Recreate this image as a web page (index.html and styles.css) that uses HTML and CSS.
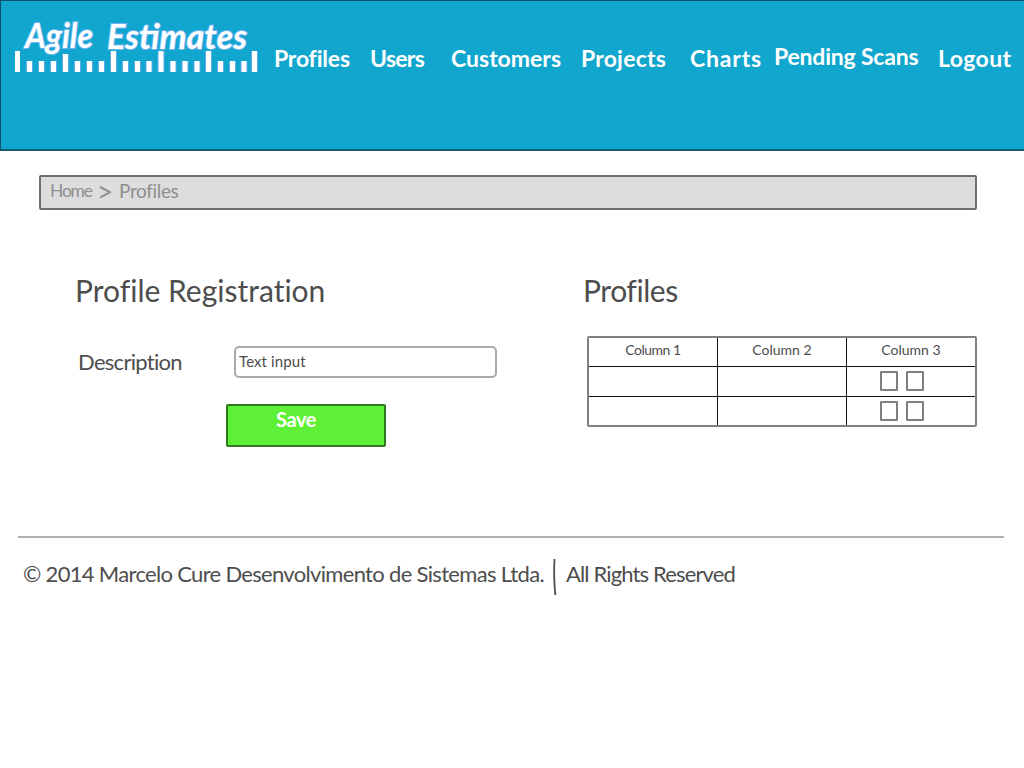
FILE: index.html
```html
<!DOCTYPE html>
<html lang="en">
<head>
<meta charset="utf-8">
<title>Agile Estimates - Profiles</title>
<link rel="stylesheet" href="styles.css">
</head>
<body>
<header class="header">
  <svg class="logo" width="244" height="68" viewBox="0 -8 244 68" role="img" aria-label="Agile Estimates">
    <g>
      <path class="ticks-halo" d="M14.500 46v11M26.500 46v11M38.500 46v11M50.500 39v18M62.500 46v11M74.500 46v11M86.500 46v11M98.500 36v21M110.500 46v11M122.500 46v11M134 46v11M146 36v21M158 46v11M170 46v11M182 46v11M193.500 36v21M205.500 46v11M217.500 46v11M229 46v11M239.500 36v21"/>
      <path class="ticks" d="M2.500 36v21M14.500 46v11M26.500 46v11M38.500 46v11M50.500 39v18M62.500 46v11M74.500 46v11M86.500 46v11M98.500 36v21M110.500 46v11M122.500 46v11M134 46v11M146 36v21M158 46v11M170 46v11M182 46v11M193.500 36v21M205.500 46v11M217.500 46v11M229 46v11M239.500 36v21"/>
    </g>
    <g class="logo-text">
      <text x="10" y="33" textLength="68" lengthAdjust="spacingAndGlyphs">Agile</text>
      <text x="92" y="34" textLength="140" lengthAdjust="spacingAndGlyphs">Estimates</text>
    </g>
  </svg>
  <nav class="nav">
    <a class="nav-profiles">Profiles</a>
    <a class="nav-users">Users</a>
    <a class="nav-customers">Customers</a>
    <a class="nav-projects">Projects</a>
    <a class="nav-charts">Charts</a>
    <a class="nav-scans">Pending Scans</a>
    <a class="nav-logout">Logout</a>
  </nav>
</header>

<div class="breadcrumb">
  <span class="crumb-home">Home</span>
  <span class="crumb-sep">&gt;</span>
  <span class="crumb-page">Profiles</span>
</div>

<main class="main">
  <section class="registration">
    <h2 class="title">Profile Registration</h2>
    <div class="field">
      <label class="label" for="description">Description</label>
      <input class="input" id="description" type="text" value="Text input">
    </div>
    <button class="save" type="button">Save</button>
  </section>

  <section class="profiles">
    <h2 class="title title-list">Profiles</h2>
    <div class="table">
      <div class="cell column-one">Column 1</div>
      <div class="cell">Column 2</div>
      <div class="cell">Column 3</div>
      <div class="cell"></div>
      <div class="cell"></div>
      <div class="cell actions"><span class="box"></span><span class="box"></span></div>
      <div class="cell"></div>
      <div class="cell"></div>
      <div class="cell actions"><span class="box"></span><span class="box"></span></div>
    </div>
  </section>
</main>

<footer class="footer">
  <span class="copyright">© 2014 Marcelo Cure Desenvolvimento de Sistemas Ltda.</span>
  <svg class="divider" width="6" height="38" viewBox="0 0 6 38"><path d="M2.500 1Q1.500 18 3.300 37"/></svg>
  <span class="rights">All Rights Reserved</span>
</footer>
</body>
</html>
```
FILE: styles.css
```css
* { box-sizing: border-box; }

body {
  margin: 0;
  background: #fff;
  color: #4d4d4d;
  font-family: Lato, sans-serif;
  font-variant-ligatures: none;
}

.header {
  display: flex;
  height: 151px;
  background: #11a6cd;
  border: 1px solid #0a5368;
  border-right: 0;
  border-bottom: 2px solid #0d5c72;
}

.logo { flex: none; margin: 6px 0 0 14px; }

.logo-text {
  font: italic bold 34px Lato, sans-serif;
  fill: #fff;
  stroke: #6fb4f2;
  stroke-width: 2px;
  paint-order: stroke;
}

.ticks-halo { stroke: #5cabec; stroke-width: 7; fill: none; }
.ticks { stroke: #fff; stroke-width: 5; fill: none; }

.nav {
  display: grid;
  grid-template-columns: 96px 81px 130px 109px 84px 164px 76px;
  align-items: start;
  margin: 45px 0 0 15px;
  color: #fff;
  font-size: 23px;
  font-weight: bold;
  line-height: 24px;
  white-space: nowrap;
}

.nav-profiles { letter-spacing: -0.2px; }
.nav-users { letter-spacing: -0.7px; }
.nav-projects { letter-spacing: 0.2px; }
.nav-charts { letter-spacing: 0.8px; }
.nav-scans { letter-spacing: -0.2px; margin-top: -2px; }
.nav-logout { letter-spacing: 0.4px; }

.breadcrumb {
  display: grid;
  grid-template-columns: 47px 22px auto;
  align-items: center;
  width: 938px;
  height: 35px;
  margin: 24px 0 0 39px;
  padding: 0 9px 3px;
  background: #ddd;
  border: 2px solid #6f6f6f;
  border-radius: 2px;
  color: #8f8f8f;
  font-size: 19px;
  line-height: 24px;
}

.crumb-home { font-size: 17.5px; letter-spacing: -1.2px; }
.crumb-sep { font-size: 28px; line-height: 20px; }
.crumb-page { font-size: 19px; letter-spacing: -0.35px; }

.main {
  display: grid;
  grid-template-columns: 508px 394px;
  height: 326px;
  padding: 60px 0 0 75px;
}

.title {
  margin: 0;
  font-size: 30px;
  font-weight: normal;
  line-height: 40px;
}

.title-list { letter-spacing: -0.45px; }

.field {
  display: flex;
  align-items: center;
  margin-top: 36px;
}

.label {
  width: 159px;
  padding: 0 0 2px 3px;
  font-size: 22px;
  letter-spacing: -0.7px;
}

.input {
  width: 263px;
  height: 32px;
  padding: 0 3px 3px;
  border: 2px solid #a9a9a9;
  border-radius: 5px;
  background: #fff;
  color: #4d4d4d;
  font: 15px Lato, sans-serif;
  letter-spacing: 0.1px;
}

.save {
  display: block;
  width: 160px;
  height: 43px;
  margin: 26px 0 0 151px;
  padding: 0 20px 13px 0;
  border: 2px solid #2f781c;
  border-radius: 2px;
  background: #5ef037;
  color: #fff;
  font: bold 20px Lato, sans-serif;
  letter-spacing: -0.4px;
}

.table {
  display: grid;
  grid-template-columns: 129px 129px 128px;
  grid-template-rows: 29px 30px 28px;
  width: 390px;
  height: 91px;
  margin: 26px 0 0 4px;
  border: 2px solid #808080;
  border-radius: 2px;
}

.cell {
  border-right: 1px solid #111;
  border-bottom: 1px solid #111;
  font-size: 14px;
  line-height: 24px;
  text-align: center;
}

.column-one { letter-spacing: -0.5px; }
.cell:nth-child(3n) { border-right: 0; }
.cell:nth-child(n+7) { border-bottom: 0; }

.actions {
  display: flex;
  gap: 8px;
  padding: 4px 0 0 33px;
}

.box {
  width: 18px;
  height: 20px;
  border: 2px solid #808080;
  border-radius: 1px;
}

.footer {
  display: flex;
  align-items: center;
  width: 986px;
  height: 75px;
  margin-left: 18px;
  padding: 0 0 3px 5px;
  border-top: 2px solid #b0b0b0;
  font-size: 22px;
  white-space: nowrap;
}

.copyright { width: 529px; letter-spacing: -0.68px; }
.divider { flex: none; width: 6px; height: 38px; margin: 8px 8px 0 0; fill: none; stroke: #4d4d4d; stroke-width: 1.8; }
.rights { letter-spacing: -0.85px; }
```
